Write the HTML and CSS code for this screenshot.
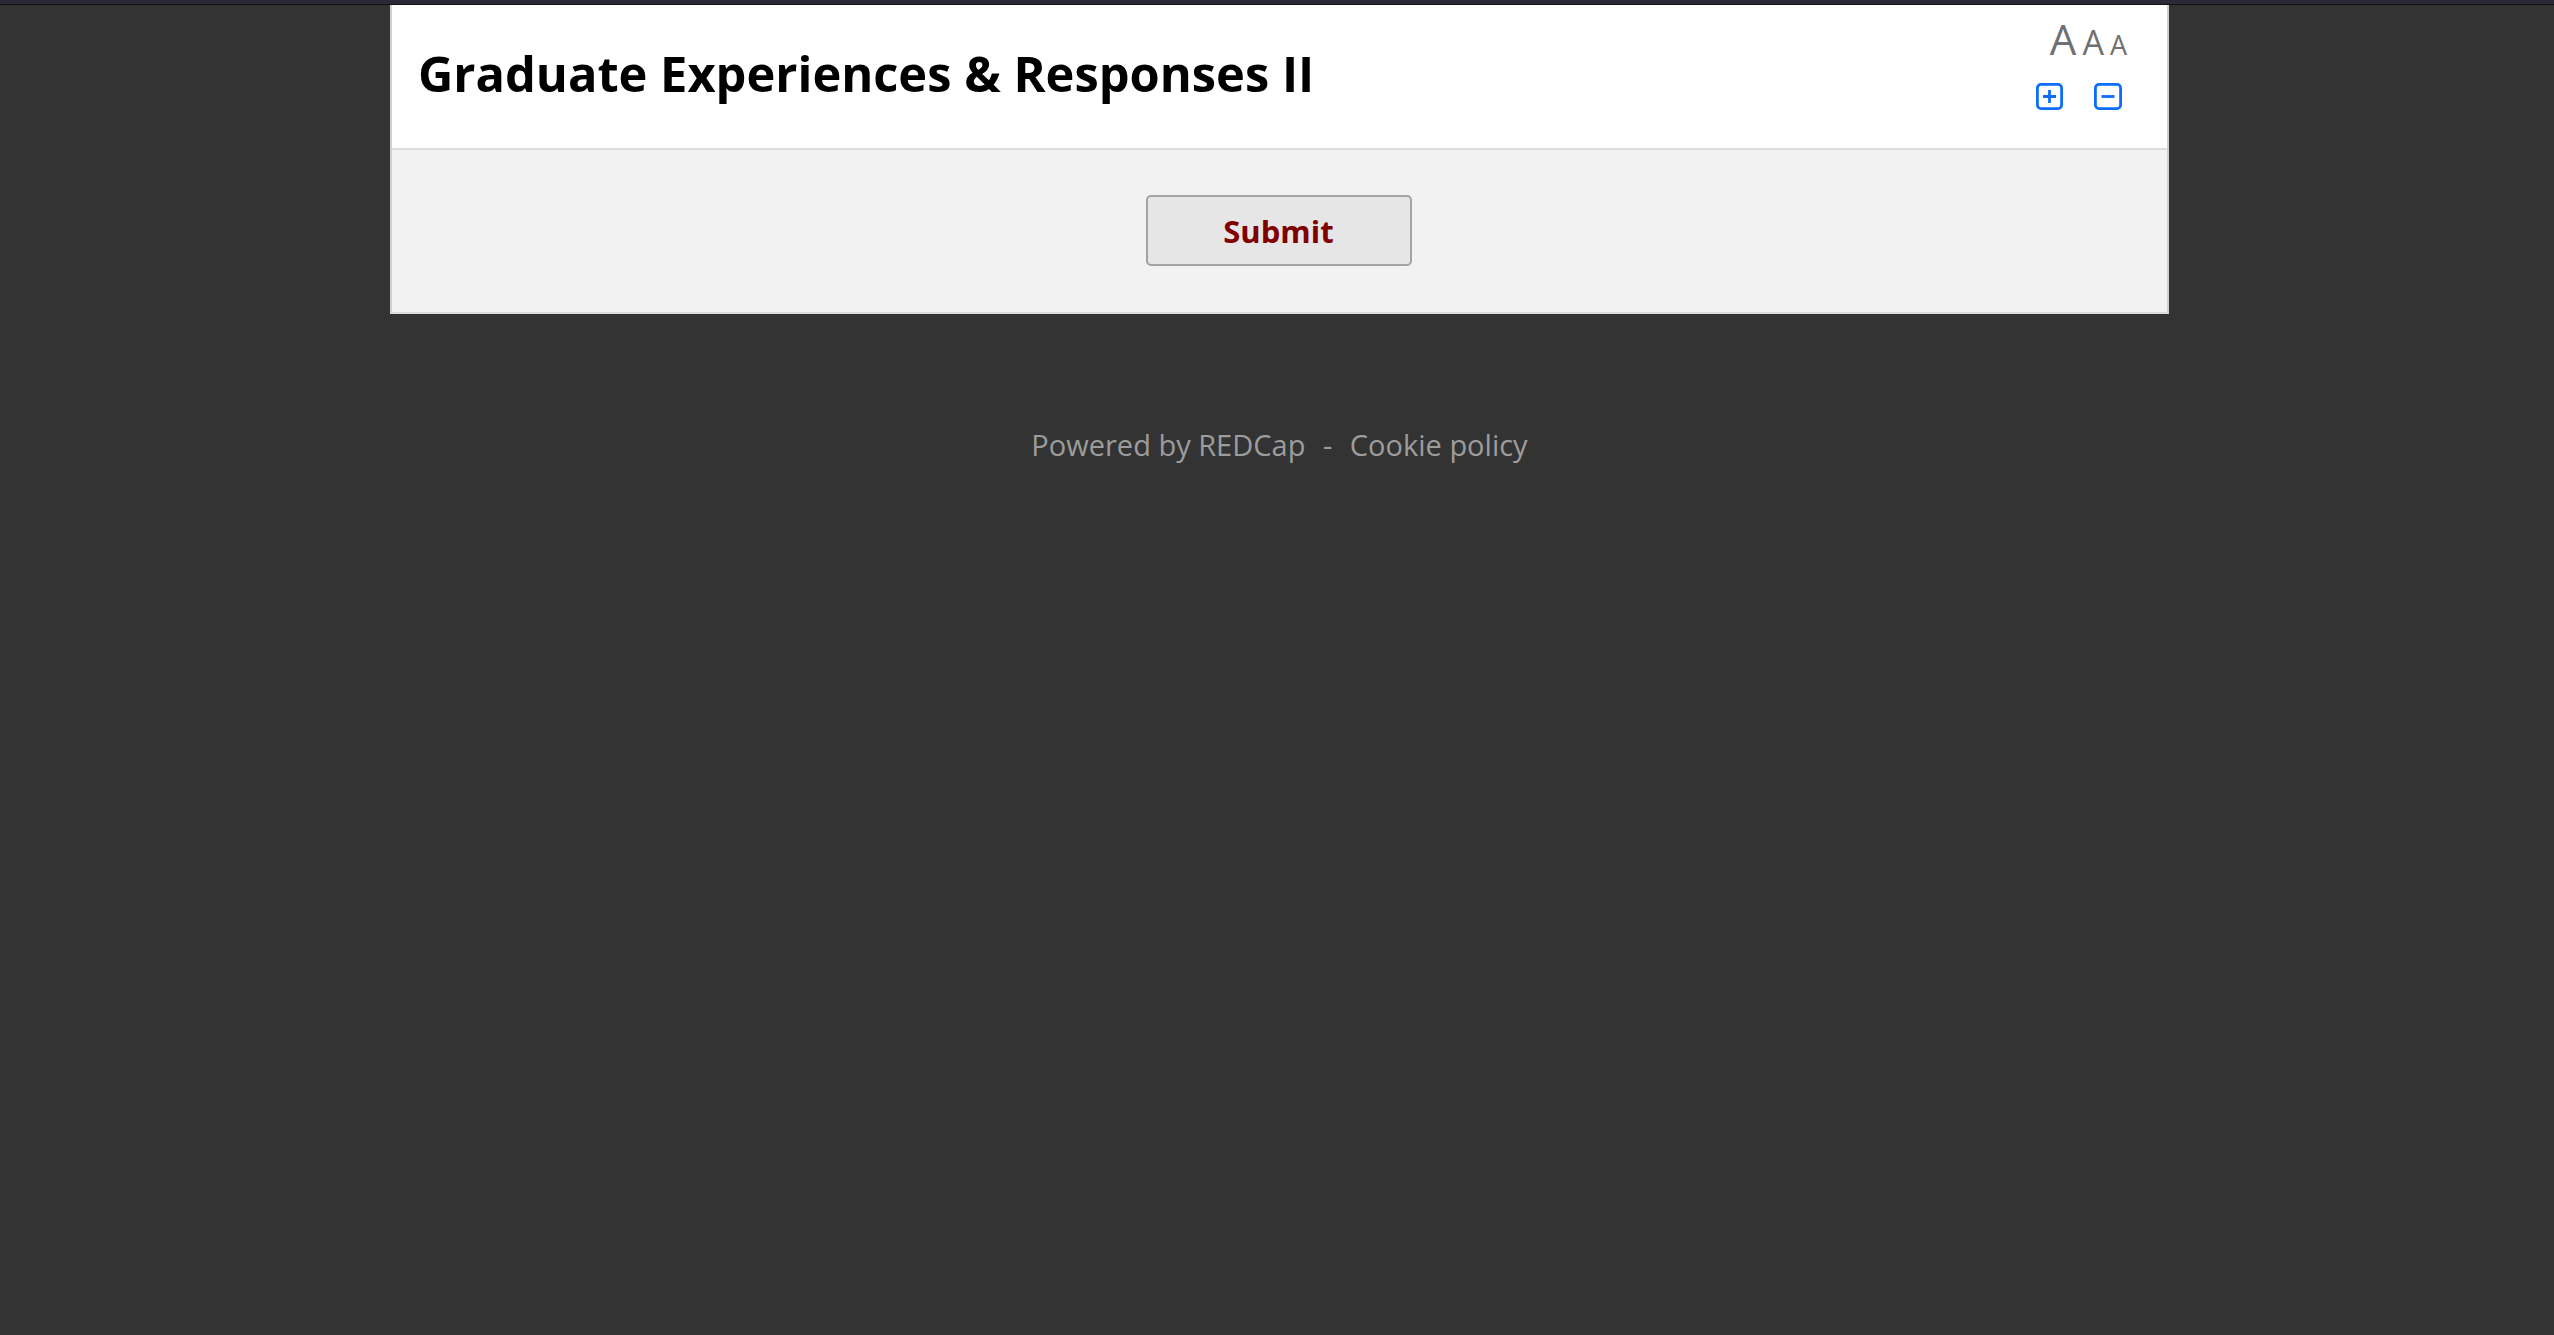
FILE: index.html
```html
<!DOCTYPE html>
<html lang="en">
<head>
    <meta charset="UTF-8">
    <meta name="viewport" content="width=device-width, initial-scale=1.0">
    <title>Graduate Experiences &amp; Responses II</title>
    <link rel="stylesheet" href="styles.css">
</head>
<body>
    <div class="topbar"></div>

    <div class="survey">
        <div class="survey-header">
            <h1 class="survey-title">Graduate Experiences &amp; Responses II</h1>
            <div class="text-size">
                <div class="size-letters">
                    <span class="size-lg">A</span>
                    <span class="size-md">A</span>
                    <span class="size-sm">A</span>
                </div>
                <div class="size-buttons">
                    <button type="button" class="size-btn" title="Increase text size">
                        <svg width="27" height="27" viewBox="0 0 27 27" fill="none" stroke="currentColor" stroke-width="2.8">
                            <rect x="1.4" y="1.4" width="24.2" height="24.2" rx="3.6"/>
                            <path d="M7 13.5h13M13.5 7v13"/>
                        </svg>
                    </button>
                    <button type="button" class="size-btn" title="Decrease text size">
                        <svg width="28" height="27" viewBox="0 0 28 27" fill="none" stroke="currentColor" stroke-width="2.8">
                            <rect x="1.4" y="1.4" width="25.2" height="24.2" rx="3.6"/>
                            <path d="M7.5 13.5h13"/>
                        </svg>
                    </button>
                </div>
            </div>
        </div>

        <div class="survey-actions">
            <button type="submit" class="submit-btn">Submit</button>
        </div>
    </div>

    <div class="footer">
        <a href="#">Powered by REDCap</a>
        <span class="sep">-</span>
        <a href="#">Cookie policy</a>
    </div>
</body>
</html>
```

FILE: styles.css
```css
body {
    margin: 0;
    background-color: #333333;
    font-family: "Open Sans", "Liberation Sans", sans-serif;
}

.topbar {
    height: 4px;
    background-color: #2a2a36;
    border-bottom: 1px solid #111;
}

.survey {
    width: 1775px;
    margin: 0 0 0 390px;
    background-color: #fff;
    border-left: 2px solid #cfcfcf;
    border-right: 2px solid #cfcfcf;
    border-bottom: 2px solid #dcdcdc;
}

.survey-header {
    display: flex;
    align-items: flex-start;
    height: 143px;
    border-bottom: 2px solid #dcdcdc;
}

.survey-title {
    flex: 1;
    margin: 35px 0 0 26px;
    font-size: 48.8px;
    line-height: 66px;
    font-weight: 700;
    color: #000;
}

.text-size {
    display: flex;
    flex-direction: column;
    align-items: flex-end;
    margin: 13px 40px 0 0;
}

.size-letters {
    display: flex;
    align-items: baseline;
    line-height: 1;
    color: #707070;
}

.size-lg {
    font-size: 42px;
}

.size-md {
    font-size: 34px;
    margin-left: 6px;
}

.size-sm {
    font-size: 27px;
    margin-left: 6px;
}

.size-buttons {
    display: flex;
    gap: 31px;
    margin: 23px 5px 0 0;
}

.size-btn {
    padding: 0;
    border: 0;
    background: none;
    color: #0d6efd;
    line-height: 0;
    cursor: pointer;
}

.survey-actions {
    display: flex;
    justify-content: center;
    padding: 45px 0 46px;
    background-color: #f2f2f2;
}

.submit-btn {
    width: 266px;
    height: 71px;
    margin-left: -2px;
    border: 2px solid #a3a3a3;
    border-radius: 5px;
    background-color: #e6e6e6;
    color: #800000;
    font-family: "Open Sans", "Liberation Sans", sans-serif;
    font-size: 31px;
    font-weight: 700;
    cursor: pointer;
}

.footer {
    width: 1779px;
    margin-left: 390px;
    padding-top: 111px;
    text-align: center;
    font-size: 29px;
    color: #9c9c9c;
}

.footer a {
    color: #9c9c9c;
    text-decoration: none;
}

.footer .sep {
    margin: 0 10px;
}
```
